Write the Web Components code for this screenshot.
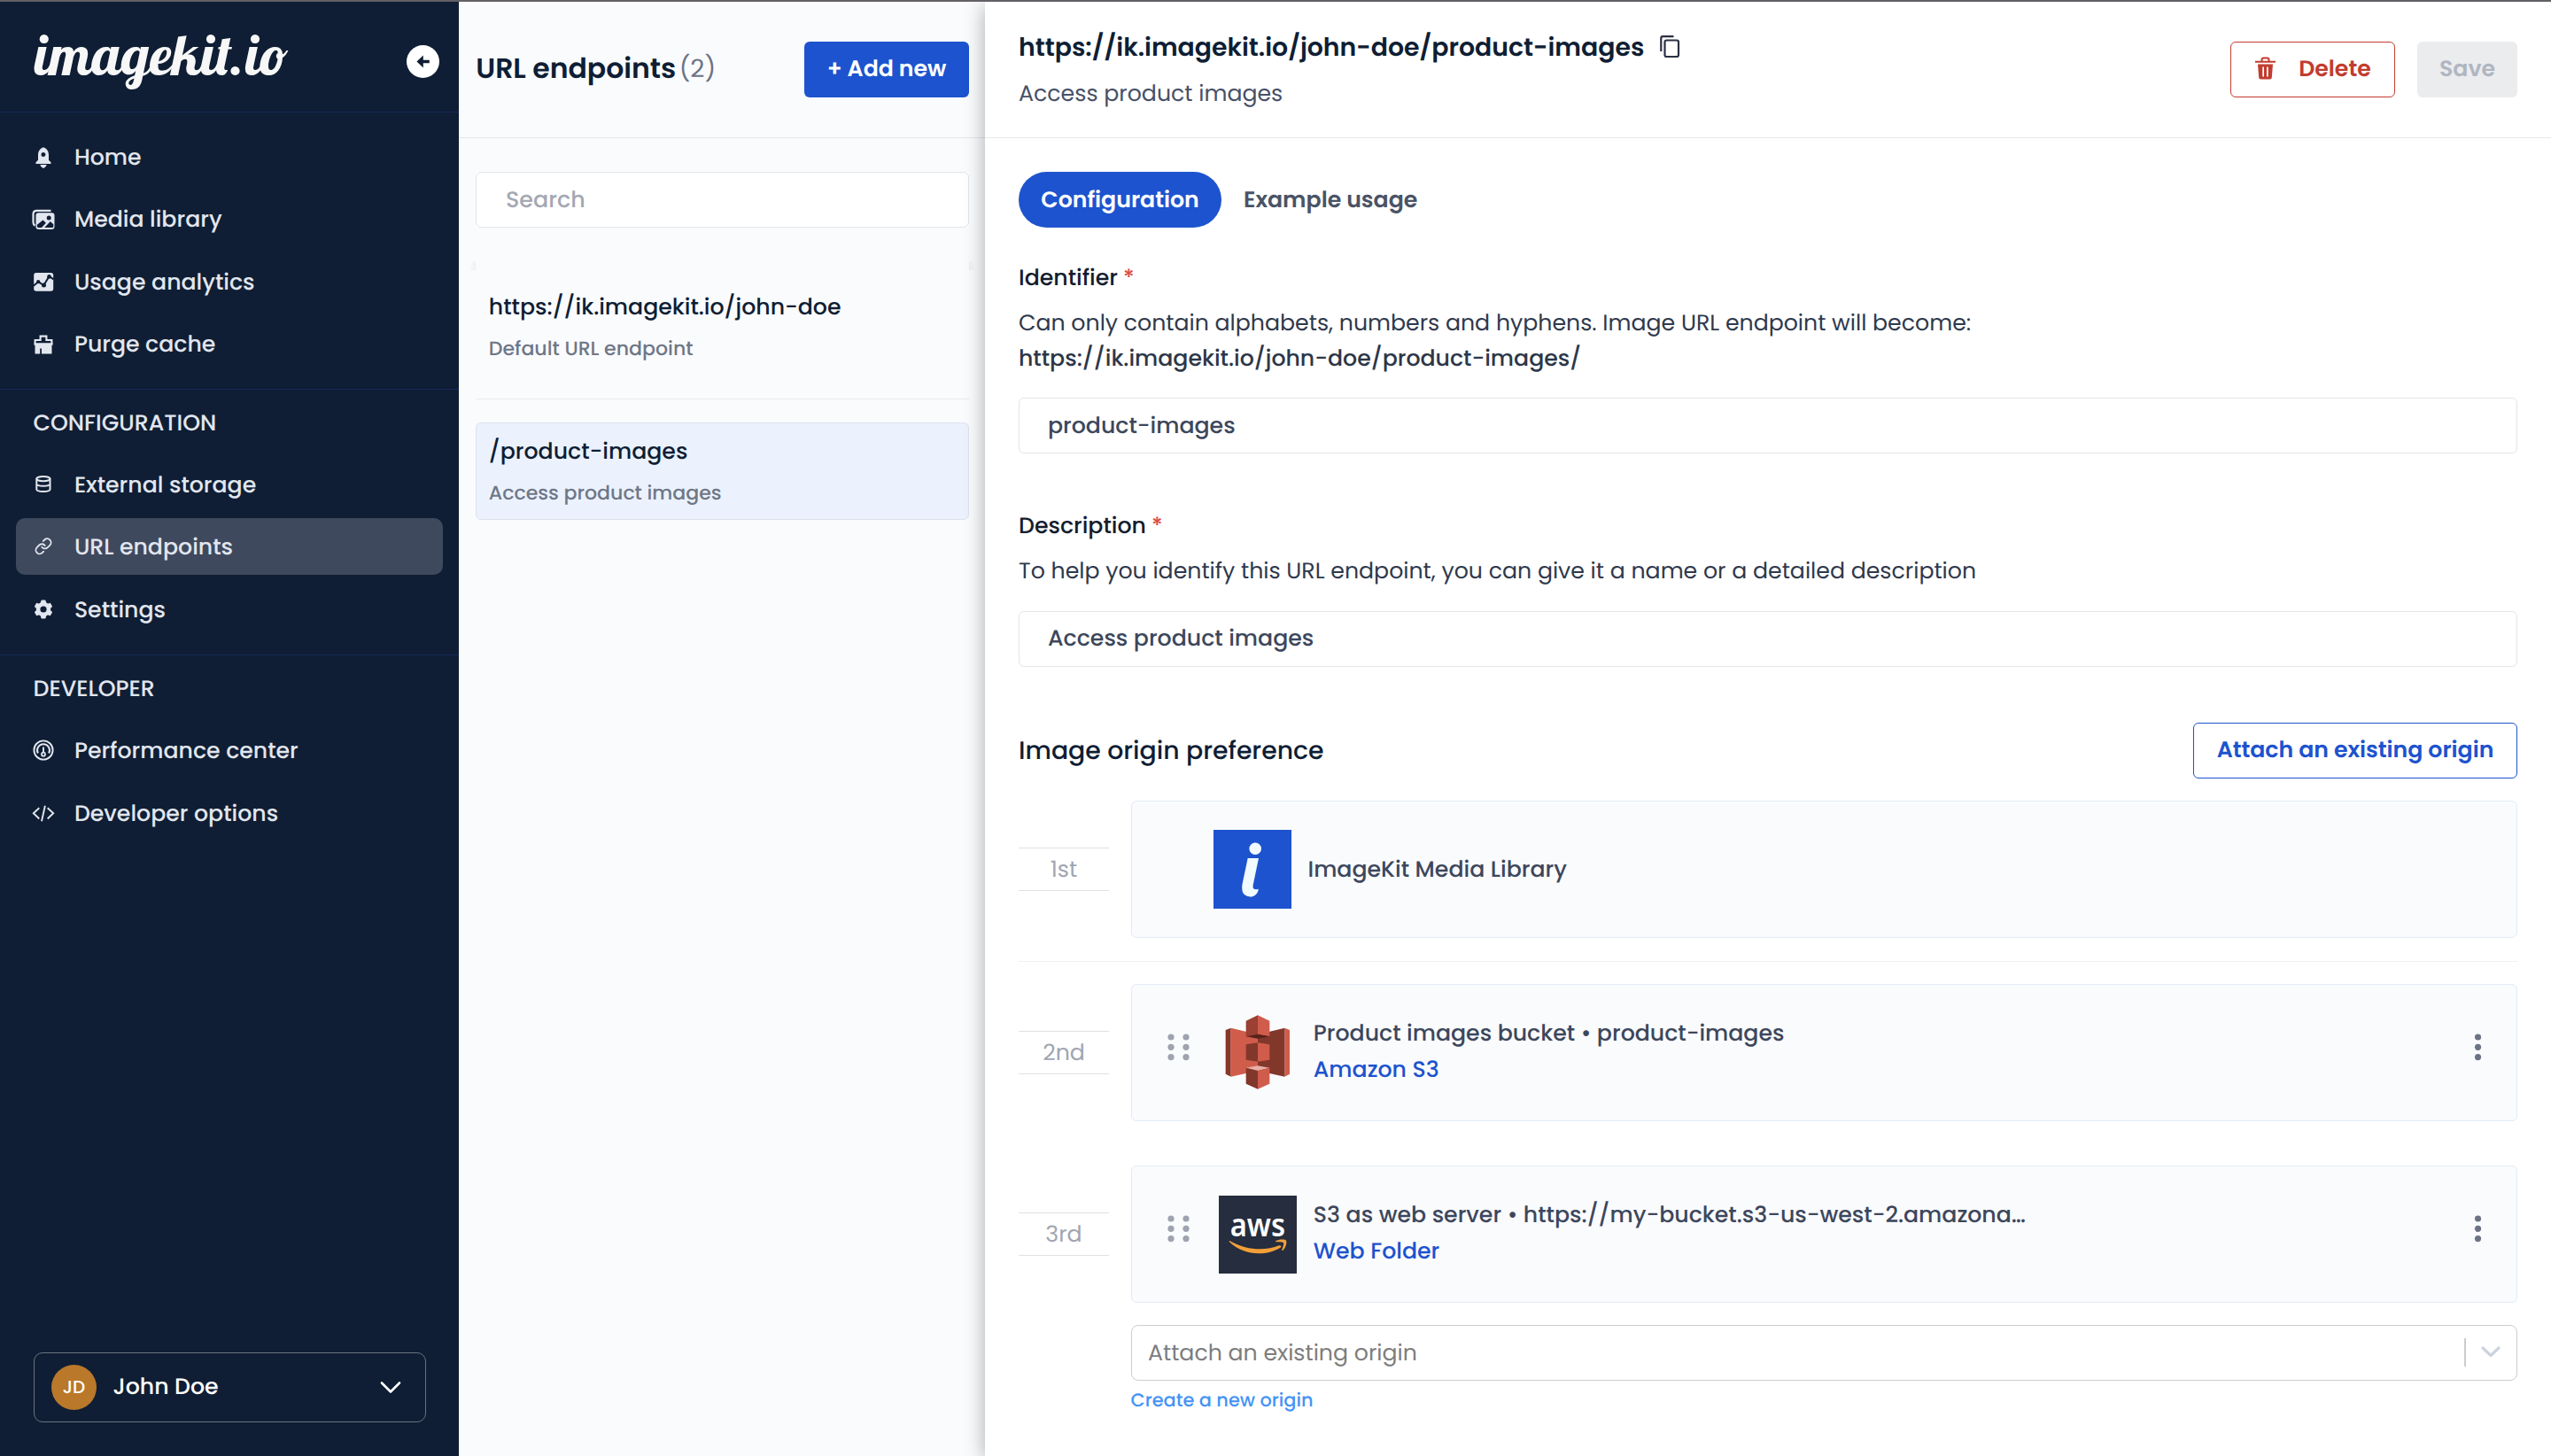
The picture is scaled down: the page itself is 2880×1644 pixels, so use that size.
<!DOCTYPE html>
<html lang="en">
<head>
<meta charset="utf-8">
<title>URL endpoints</title>
<style>
  html, body { margin: 0; padding: 0; }
  body { width: 2880px; height: 1644px; overflow: hidden; background: #fff; font-family: Poppins, Inter, "Noto Sans", sans-serif; }
</style>
</head>
<body>
<ik-app></ik-app>

<script>
const NAVY = '#0f1e34';

class Base extends HTMLElement {
  connectedCallback() {
    if (this.shadowRoot) return;
    this.attachShadow({ mode: 'open' }).innerHTML =
      `<style>:host{display:block;box-sizing:border-box}*{box-sizing:border-box}svg{display:block;flex:none;overflow:visible}${this.css()}</style>${this.html()}`;
  }
  css() { return ''; }
  html() { return '<slot></slot>'; }
  a(name, fallback = '') { return this.getAttribute(name) ?? fallback; }
}

const text = (str, opt = {}) =>
  `<ik-text fs="${opt.fs || 25.24}" wt="${opt.wt || 500}" color="${opt.color || 'inherit'}">${str}</ik-text>`;

const ICONS = {
  home: `<path fill="currentColor" fill-rule="evenodd" d="M14 3.2C18.400 4.800 20 8.400 20 12v5.800l2.500 2.400v1.700h-17v-1.700L8 17.800V12c0-3.600 1.600-7.200 6-8.800zM14 9a2.500 2.500 0 1 0 0 5 2.500 2.500 0 0 0 0-5z"/><path fill="currentColor" d="M10.300 23h7.400c-.6 1.900-1.900 3.200-3.700 3.900-1.800-.7-3.100-2-3.700-3.900z"/>`,
  media: `<path d="M22.500 4.800H6.500q-4 0-4 4v9q0 2.800 2 4" fill="none" stroke="currentColor" stroke-width="2.200"/><rect x="5.500" y="7.300" width="21" height="18.600" rx="3.200" fill="currentColor"/><path fill="${NAVY}" d="M6.900 20.800l6.600-5.400 3.400 3.400-4.900 5.300H8.400q-1.500 0-1.500-1.500zM15.200 24.100l6.600-7 3.500 3.200v2.300q0 1.500-1.500 1.500z"/><circle cx="20.200" cy="13" r="2.500" fill="${NAVY}"/>`,
  chart: `<rect x="3.200" y="4" width="22" height="20.800" rx="2.800" fill="currentColor"/><path d="M2.800 18.700l5.400-4.400 6.300 3.700 6-10 5 3.300" fill="none" stroke="${NAVY}" stroke-width="2"/><g fill="${NAVY}"><circle cx="8.200" cy="14.200" r="2.100"/><circle cx="14.500" cy="18" r="2.500"/><circle cx="20.500" cy="8.400" r="2.300"/></g>`,
  purge: `<path d="M4.600 14.500V10h6V5.600h6.800V10h6v4.500" fill="none" stroke="currentColor" stroke-width="2.100"/><path fill="currentColor" d="M3.500 13.300h21v2.400h-1v9.900H12v-6.200h-1.800v6.200H4.500v-9.900h-1z"/>`,
  db: `<g fill="none" stroke="currentColor" stroke-width="2"><ellipse cx="13.900" cy="7.600" rx="7.600" ry="2.700"/><path d="M6.300 7.600v12c0 3.300 15.200 3.300 15.200 0v-12M6.300 13.300c0 3.300 15.200 3.300 15.200 0"/></g>`,
  link: `<g transform="translate(3.700 3.500) scale(.86)" fill="none" stroke="currentColor" stroke-width="2.100" stroke-linecap="round"><path d="M10 13a5 5 0 0 0 7.540.540l3-3a5 5 0 0 0-7.070-7.070l-1.720 1.710"/><path d="M14 11a5 5 0 0 0-7.540-.540l-3 3a5 5 0 0 0 7.070 7.070l1.710-1.710"/></g>`,
  gear: `<g transform="translate(14 14)"><circle r="5.900" fill="none" stroke="currentColor" stroke-width="4.600"/>${[0, 60, 120, 180, 240, 300].map(r => `<path transform="rotate(${r})" d="M-3.300-6.500l.6-3q.2-.9 1.100-.9h3.200q.9 0 1.100.9l.6 3z" fill="currentColor"/>`).join('')}</g>`,
  perf: `<g fill="none" stroke="currentColor"><circle cx="14" cy="14" r="10.600" stroke-width="1.900"/><path d="M7.900 17.600a7 7 0 1 1 12.200 0" stroke-width="2"/><circle cx="14" cy="18.700" r="2" stroke-width="1.700"/><path d="M14 10.500v6.200" stroke-width="1.900"/></g>`,
  code: `<path d="M9.300 8.300l-6.500 6 6.500 6.200M18.700 8.300l6.500 6-6.500 6.200M15.900 5.700l-3.900 17.500" fill="none" stroke="currentColor" stroke-width="1.900"/>`,
};

class IkText extends Base {
  css() {
    return `:host{flex:none;height:40px;line-height:40px;white-space:nowrap;text-rendering:geometricPrecision;letter-spacing:-.015px;
      font-size:${this.a('fs')}px;font-weight:${this.a('wt')};color:${this.a('color')}}`;
  }
}

class IkIcon extends Base {
  css() { return ':host{flex:none;width:28px;height:28px}'; }
  html() { return `<svg width="28" height="28" viewBox="0 0 28 28">${ICONS[this.a('name')]}</svg>`; }
}

class NavItem extends Base {
  css() {
    return `:host{display:flex;align-items:center;height:64px;margin:0 18px;padding-left:17.300px;border-radius:10px;
      background:${this.hasAttribute('active') ? '#3f495d' : 'none'}} ik-icon{margin-right:20.600px}`;
  }
  html() { return `<ik-icon name="${this.a('icon')}"></ik-icon>${text(this.a('label'))}`; }
}

class NavGroup extends Base {
  css() {
    return `:host{display:flex;flex-direction:column;gap:6.400px;border-top:1px solid #15295a;padding:18px 0 18.800px}
      :host([heading]){padding-top:0;padding-bottom:19.400px} .h{height:68.600px;padding:17px 0 0 37.500px}`;
  }
  html() {
    return (this.a('heading') ? `<div class="h">${text(this.a('heading'), { fs: 25.3 })}</div>` : '') + '<slot></slot>';
  }
}

class UserMenu extends Base {
  css() {
    return `:host{display:flex;align-items:center;height:79px;margin:0 37px 38px 38px;padding:0 27px 0 19px;border:1px solid #6b7382;border-radius:10px;color:#fff}
      .av{display:flex;align-items:center;justify-content:center;width:51px;height:51px;border-radius:50%;background:#ba782a;margin-right:18.500px;padding-bottom:1px}
      .n{flex:1;padding-bottom:3px}`;
  }
  html() {
    return `<div class="av">${text('JD', { fs: 20 })}</div><div class="n">${text('John Doe')}</div>
      <svg width="24" height="16" viewBox="0 0 24 16"><path d="M2 2.500l10 10 10-10" fill="none" stroke="#fff" stroke-width="2.600" stroke-linecap="round" stroke-linejoin="round"/></svg>`;
  }
}

class SideBar extends Base {
  css() {
    return `:host{display:flex;flex-direction:column;flex:none;width:518px;background:${NAVY};color:#e2e6ef}
      .top{display:flex;justify-content:space-between;align-items:center;height:124px;padding:11px 22.500px 0 37px}
      .logo text{font:italic 700 63px "Lobster Two",Lobster,"Liberation Serif",serif;fill:#f7f7f7}
      .grow{flex:1}`;
  }
  html() {
    return `<div class="top">
        <svg class="logo" width="294" height="90" viewBox="0 0 294 90"><text x="1" y="60.300" textLength="286" lengthAdjust="spacingAndGlyphs">imagekit.io</text></svg>
        <svg width="37" height="37" viewBox="0 0 37 37"><circle cx="18.500" cy="18.500" r="18.500" fill="#fff"/><path d="M11.500 18.500l7.300-7v5.300h7v3.400h-7v5.300z" fill="${NAVY}"/></svg>
      </div>
      <nav-group>
        <nav-item icon="home" label="Home"></nav-item>
        <nav-item icon="media" label="Media library"></nav-item>
        <nav-item icon="chart" label="Usage analytics"></nav-item>
        <nav-item icon="purge" label="Purge cache"></nav-item>
      </nav-group>
      <nav-group heading="CONFIGURATION">
        <nav-item icon="db" label="External storage"></nav-item>
        <nav-item icon="link" label="URL endpoints" active></nav-item>
        <nav-item icon="gear" label="Settings"></nav-item>
      </nav-group>
      <nav-group heading="DEVELOPER">
        <nav-item icon="perf" label="Performance center"></nav-item>
        <nav-item icon="code" label="Developer options"></nav-item>
      </nav-group>
      <div class="grow"></div>
      <user-menu></user-menu>`;
  }
}

class IkButton extends Base {
  css() {
    return `:host{display:flex;align-items:center;justify-content:center;flex:none;height:63px;border-radius:6px;border:1px solid transparent;padding-bottom:3px}
      :host([kind=primary]){background:#1d53ce;color:#fff}
      :host([kind=pill]){background:#1d53ce;color:#fff;border-radius:32px;padding-bottom:1px}
      :host([kind=outline]){border-color:#1d53ce;color:#1d53ce;background:#fff;padding-bottom:2px}
      :host([kind=danger]){border-color:#c23c2f;color:#c23c2f;background:#fff}
      :host([kind=muted]){background:#ebecee;color:#b0b6c1}
      :host([kind=plain]){color:#4a5366;padding:0 12px 1px}`;
  }
}

class TextField extends Base {
  css() {
    return `:host{background:#fff;height:63px}.b{display:flex;align-items:center;height:63px;border:1px solid #e3e5ea;border-radius:6px;padding:0 0 1px 32px;background:#fff}
      :host([raised]) .b{padding-bottom:2px}`;
  }
  html() { return '<div class="b"><slot></slot></div>'; }
}

class EndpointItem extends Base {
  css() {
    return `:host{padding:11.300px 13.800px 0;border:1px solid transparent;border-radius:6px;height:110px}
      :host([selected]){background:#ebf2fe;border-color:#dde2ea} .s{margin-top:7.600px}`;
  }
  html() {
    return `${text(this.a('label'), { color: NAVY })}<div class="s">${text(this.a('sub'), { fs: 22.1, color: '#6f7787' })}</div>`;
  }
}

class EndpointList extends Base {
  css() {
    return `:host{flex:none;width:594px;background:#fafbfd}
      header{display:flex;align-items:center;justify-content:space-between;height:154px;padding:0 18px 0 19.200px;border-bottom:1px solid #e3e5e8}
      .t{display:flex;align-items:center;gap:3.500px;padding-bottom:2px}
      ik-button{width:186px}
      .body{padding:38px 18px 0 19px}
      .search{padding-left:1px}
      .list{margin:38px -6px 0;padding:0 6px;background:linear-gradient(100deg,rgba(0,0,0,0),rgba(0,0,0,.05)) left top/6px 10px no-repeat,linear-gradient(260deg,rgba(0,0,0,0),rgba(0,0,0,.05)) right top/6px 10px no-repeat}
      .one{padding-top:19px;height:156px;border-bottom:1px solid #e9ebef;margin-bottom:26px}`;
  }
  html() {
    return `<header><div class="t">${text('URL endpoints', { fs: 31.5, wt: 600, color: NAVY })}${text('(2)', { fs: 28, wt: 400, color: '#6b7384' })}</div>
        <ik-button kind="primary">${text('+ Add new', { wt: 600 })}</ik-button></header>
      <div class="body">
        <text-field><div class="search">${text('Search', { fs: 25.4, color: '#a3a8b3' })}</div></text-field>
        <div class="list">
          <div class="one"><endpoint-item label="https://ik.imagekit.io/john-doe" sub="Default URL endpoint"></endpoint-item></div>
          <endpoint-item selected label="/product-images" sub="Access product images"></endpoint-item>
        </div>
      </div>`;
  }
}

const dots = (cols, color) => {
  const w = cols === 2 ? 25 : 9;
  const c = [0, 1, 2].flatMap(r => (cols === 2 ? [4, 21] : [4.5]).map(x => `<circle cx="${x}" cy="${4 + r * 11.3}" r="3.600"/>`)).join('');
  return `<svg width="${w}" height="31" viewBox="0 0 ${w} 31" fill="${color}">${c}</svg>`;
};

const LOGOS = {
  ik: `<svg width="88" height="89" viewBox="0 0 88 89"><rect width="88" height="89" fill="#1d53ce"/><text x="31.500" y="75" style="font:italic 700 85px 'Lobster Two',Lobster,'Liberation Serif',serif;fill:#f1faff">i</text></svg>`,
  s3: `<svg width="88" height="88" viewBox="228 43 264 264"><path fill="#8a3528" d="M251 100l18-7v165l-18-9z"/><path fill="#d05c4b" d="M269 93l91 22v123l-91 20zM451 93l17 7v149l-17 9z"/><path fill="#82372b" d="M451 93l-91 22v123l91 20zM320 149l40-6v64l-40-6z"/><path fill="#d05c4b" d="M360 143l40 6v52l-40 6zM360 50l40 19v53l-40-7z"/><path fill="#9b4033" d="M360 50l-40 19v53l40-7z"/><path fill="#57211a" d="M320 122l40-8 40 8-40 7z"/><path fill="#e8b0a7" d="M320 228l40-7 40 7-40 10z"/><path fill="#82372b" d="M320 228l40 10v62l-40-18z"/><path fill="#d05c4b" d="M400 228l-40 10v62l40-18z"/></svg>`,
  aws: `<svg style="margin-top:1px" width="88" height="88" viewBox="228 660 264 264"><rect x="228" y="660" width="264" height="264" fill="#252d3e"/><text x="266" y="799" textLength="187" lengthAdjust="spacingAndGlyphs" style="font:600 109px 'Noto Sans','Open Sans',sans-serif;fill:#fff">aws</text><path fill="#f29f38" d="M263 816q1-5 6-1c54 31 118 32 163 14 6-2 10 3 5 7-50 30-125 28-174-20z"/><path fill="#f29f38" d="M421 814c9-6 30-7 35-2 4 8-3 28-12 34-3 0-3-2-2-4 4-9 7-19 5-22-4-4-16-3-24-3-4 0-4-2-2-3z"/></svg>`,
};

class OriginRow extends Base {
  css() {
    return `:host{display:flex;align-items:center;gap:25px;height:155px}
      .rank{display:flex;align-items:center;justify-content:center;flex:none;width:102px;height:49px;border:solid #dfe1e5;border-width:1px 0}
      .card{display:flex;align-items:center;flex:1;height:155px;border:1px solid #e3ebf8;border-radius:6px;background:#fafbfd}
      .drag{margin:0 33px 11px 40px}.pad{width:92px}.kebab{margin:0 39.500px 11px auto}
      .txt{display:flex;flex-direction:column;gap:.4px;margin-left:18.500px}.txt.two{padding-bottom:4px;margin-left:18.800px}`;
  }
  html() {
    const link = this.a('link');
    return `<div class="rank">${text(this.a('rank'), { wt: 400, color: '#a0a5b1' })}</div>
      <div class="card">${link ? `<div class="drag">${dots(2, '#9ea3af')}</div>` : '<div class="pad"></div>'}${LOGOS[this.a('logo')]}
        <div class="txt ${link ? 'two' : ''}">${text(this.a('label'), { color: '#3d475c' })}${link ? text(link, { color: '#1d53ce' }) : ''}</div>
        ${link ? `<div class="kebab">${dots(1, '#6b7384')}</div>` : ''}</div>`;
  }
}

class EndpointDetail extends Base {
  css() {
    return `:host{flex:1;background:#fff;box-shadow:0 4px 22px rgba(0,0,0,.32);z-index:1}
      header{display:flex;justify-content:space-between;height:154px;padding:30.500px 38px 0;border-bottom:1px solid #e6e7e9}
      .title{display:flex;align-items:center;gap:18px;margin-bottom:12.800px}
      .acts{display:flex;gap:25px;padding-top:14.500px}
      .acts svg{margin-right:25px}
      .body{padding:38px 38px 0}
      .tabs{display:flex;gap:12px;margin-bottom:36.200px}
      .lab{display:flex;gap:6px}
      .hint{display:flex;flex-direction:column;gap:.6px;margin:10.700px 0 24.500px}
      .row{display:flex;align-items:center;justify-content:space-between;margin:63px 0 25px}
      hr{border:0;border-top:1px solid #eff0f3;margin:26px 0 25px}
      .select{display:flex;align-items:center;height:63px;margin:25px 0 3px 127px;padding:0 18px;border:1px solid #cccdd0;border-radius:8px}
      .select i{width:2px;height:32px;background:#ccc;margin:0 17px 0 auto}
      .new{margin-left:126.600px}`;
  }
  html() {
    const star = text('*', { color: '#dc4b42' });
    return `<header>
        <div><div class="title">${text('https://ik.imagekit.io/john-doe/product-images', { fs: 28.35, wt: 600, color: NAVY })}
          <svg width="24" height="28" viewBox="0 0 24 28" fill="none" stroke="#2b2f42" stroke-width="2.200"><rect x="5.500" y="6.500" width="15.500" height="18.500" rx="2"/><path d="M1.300 19V4q0-1.900 1.900-1.900h12.300"/></svg></div>
          ${text('Access product images', { wt: 400, color: '#475067' })}</div>
        <div class="acts">
          <ik-button kind="danger" style="width:186px"><svg width="25" height="28" viewBox="0 0 25 28"><path d="M1 6.800h23M8.500 6V4.500q0-2 2-2h4q2 0 2 2V6" fill="none" stroke="currentColor" stroke-width="2"/><path fill="currentColor" fill-rule="evenodd" d="M4 9.500h17l-1.200 15q-.1 2-2 2H7.200q-1.900 0-2-2zM9.300 12.500v11h1.700v-11zM14 12.500v11h1.700v-11z"/></svg>${text('Delete', { wt: 600 })}</ik-button>
          <ik-button kind="muted" style="width:113px">${text('Save', { wt: 600 })}</ik-button>
        </div>
      </header>
      <div class="body">
        <div class="tabs"><ik-button kind="pill" style="width:229px">${text('Configuration', { wt: 600 })}</ik-button>
          <ik-button kind="plain">${text('Example usage', { wt: 600 })}</ik-button></div>
        <div class="lab">${text('Identifier', { color: '#141d2e' })}${star}</div>
        <div class="hint">${text('Can only contain alphabets, numbers and hyphens. Image URL endpoint will become:', { wt: 400, color: '#2f394c' })}
          ${text('https://ik.imagekit.io/john-doe/product-images/', { color: '#2d3748' })}</div>
        <text-field>${text('product-images', { color: '#3d475c' })}</text-field>
        <div class="lab" style="margin-top:61.200px">${text('Description', { color: '#141d2e' })}${star}</div>
        <div class="hint" style="margin:11px 0 25.800px">${text('To help you identify this URL endpoint, you can give it a name or a detailed description', { wt: 400, color: '#2f394c' })}</div>
        <text-field raised>${text('Access product images', { color: '#3d475c' })}</text-field>
        <div class="row">${text('Image origin preference', { fs: 28.35, color: NAVY })}
          <ik-button kind="outline" style="width:366px">${text('Attach an existing origin', { wt: 600 })}</ik-button></div>
        <origin-row rank="1st" logo="ik" label="ImageKit Media Library"></origin-row>
        <hr>
        <origin-row rank="2nd" logo="s3" label="Product images bucket • product-images" link="Amazon S3"></origin-row>
        <origin-row style="margin-top:50px" rank="3rd" logo="aws" label="S3 as web server • https://my-bucket.s3-us-west-2.amazona…" link="Web Folder"></origin-row>
        <div class="select">${text('Attach an existing origin', { wt: 400, color: '#7d7d7d' })}<i></i>
          <svg width="22" height="14" viewBox="0 0 22 14"><path d="M2 2l9 8.500L20 2" fill="none" stroke="#cbd3df" stroke-width="3.200" stroke-linecap="round" stroke-linejoin="round"/></svg></div>
        <div class="new">${text('Create a new origin', { fs: 20.9, color: '#4593f5' })}</div>
      </div>`;
  }
}

class IkApp extends Base {
  css() {
    return `:host{width:2880px;height:1644px;border-top:2px solid #636066;overflow:hidden}
      main{display:flex;height:1642px}`;
  }
  html() { return '<main><side-bar></side-bar><endpoint-list></endpoint-list><endpoint-detail></endpoint-detail></main>'; }
}

customElements.define('ik-app', IkApp);
customElements.define('side-bar', SideBar);
customElements.define('endpoint-list', EndpointList);
customElements.define('endpoint-detail', EndpointDetail);
customElements.define('nav-group', NavGroup);
customElements.define('nav-item', NavItem);
customElements.define('user-menu', UserMenu);
customElements.define('ik-button', IkButton);
customElements.define('text-field', TextField);
customElements.define('endpoint-item', EndpointItem);
customElements.define('origin-row', OriginRow);
customElements.define('ik-icon', IkIcon);
customElements.define('ik-text', IkText);
</script>
</body>
</html>
